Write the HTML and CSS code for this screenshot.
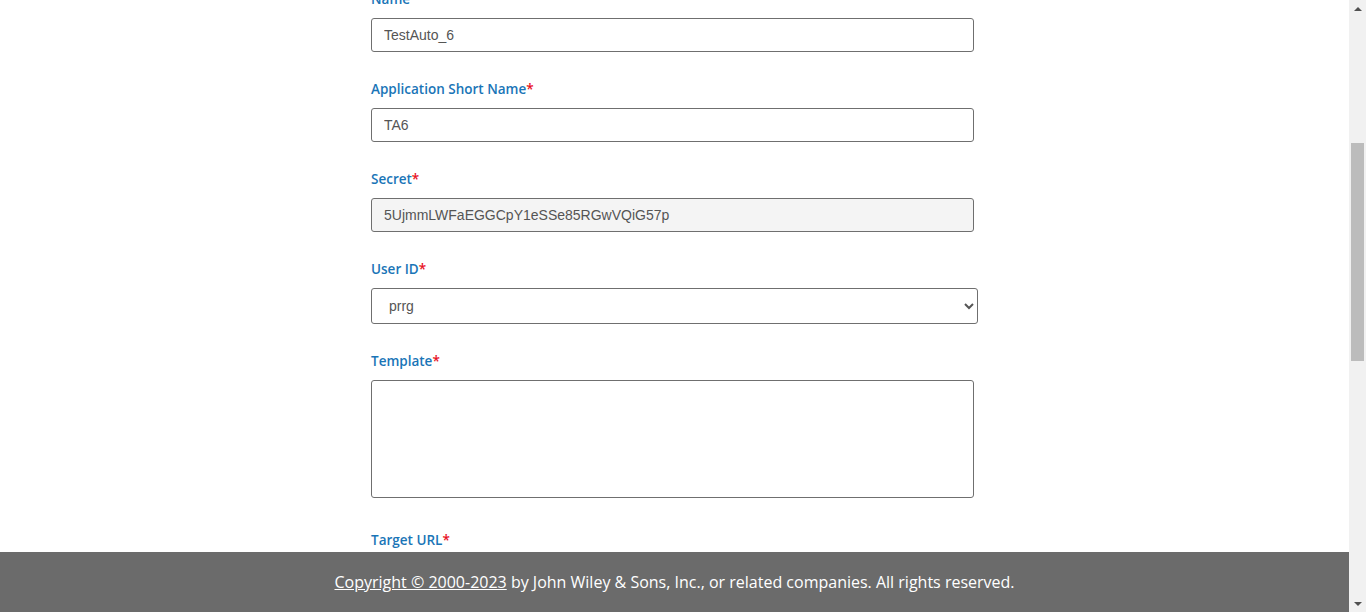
FILE: index.html
```html
<!DOCTYPE html>
<html lang="en">
<head>
<meta charset="utf-8">
<title>Edit Application</title>
<link rel="stylesheet" href="styles.css">
</head>
<body>
<div class="viewport">
  <main class="page">
    <form class="app-form">
      <div class="field">
        <label class="field-label" for="name">Name<span class="req">*</span></label>
        <input class="text-input" id="name" type="text" value="TestAuto_6">
      </div>
      <div class="field">
        <label class="field-label" for="short">Application Short Name<span class="req">*</span></label>
        <input class="text-input" id="short" type="text" value="TA6">
      </div>
      <div class="field">
        <label class="field-label" for="secret">Secret<span class="req">*</span></label>
        <input class="text-input readonly" id="secret" type="text" value="5UjmmLWFaEGGCpY1eSSe85RGwVQiG57p" readonly>
      </div>
      <div class="field">
        <label class="field-label" for="user">User ID<span class="req">*</span></label>
        <select class="select-input" id="user">
          <option>prrg</option>
        </select>
      </div>
      <div class="field field-area">
        <label class="field-label" for="template">Template<span class="req">*</span></label>
        <textarea class="area-input" id="template"></textarea>
      </div>
      <div class="field">
        <label class="field-label" for="target">Target URL<span class="req">*</span></label>
        <input class="text-input" id="target" type="text" value="">
      </div>
      <div class="field">
        <label class="field-label" for="desc">Description</label>
        <input class="text-input" id="desc" type="text" value="">
      </div>
    </form>
  </main>
</div>
<footer class="site-footer">
  <p class="footer-text"><a class="footer-link" href="#">Copyright © 2000-2023</a> by John Wiley &amp; Sons, Inc., or related companies. All rights reserved.</p>
</footer>
<div class="scrollbar" aria-hidden="true">
  <span class="sb-arrow sb-up"></span>
  <div class="sb-track"><span class="sb-thumb"></span></div>
  <span class="sb-arrow sb-down"></span>
</div>
<script src="script.js"></script>
</body>
</html>
```
FILE: styles.css
```css
html, body {
  margin: 0;
  padding: 0;
}
body {
  background: #ffffff;
  font-family: "Open Sans", "Liberation Sans", sans-serif;
}
.viewport {
  margin-right: 17px;
  min-height: 1623px;
}
.page {
  width: 607px;
  margin: 0 auto;
  padding-top: 343px;
}
.app-form {
  display: flex;
  flex-direction: column;
}
.field {
  display: flex;
  flex-direction: column;
  align-items: flex-start;
  margin-bottom: 27px;
}
.field-area {
  margin-bottom: 32px;
}
.field-label {
  font-family: "Open Sans", sans-serif;
  font-size: 13.5px;
  font-weight: 600;
  line-height: 20px;
  color: #1a75b7;
  margin-bottom: 9px;
}
.req {
  color: #e8101e;
}
.text-input {
  box-sizing: border-box;
  width: 603px;
  height: 34px;
  margin: 0;
  padding: 0 12px;
  border: 1px solid #6f6f6f;
  border-radius: 3px;
  font-family: "Liberation Sans", Arial, sans-serif;
  font-size: 14px;
  color: #555555;
  background: #ffffff;
  outline: none;
}
.text-input.readonly {
  background: #f4f4f4;
}
.select-input {
  box-sizing: border-box;
  width: 607px;
  height: 36px;
  margin: 0;
  padding: 0 0 0 13px;
  border: 1px solid #6f6f6f;
  border-radius: 3px;
  font-family: "Liberation Sans", Arial, sans-serif;
  font-size: 14px;
  color: #555555;
  background: #ffffff;
}
.area-input {
  box-sizing: border-box;
  width: 603px;
  height: 118px;
  margin: 0;
  border: 1px solid #6f6f6f;
  border-radius: 3px;
  resize: none;
  font-family: "Liberation Sans", Arial, sans-serif;
  font-size: 14px;
}
.site-footer {
  position: fixed;
  left: 0;
  right: 17px;
  bottom: 0;
  height: 60px;
  background: #6b6b6b;
  display: flex;
  align-items: center;
  justify-content: center;
}
.footer-text {
  margin: 0;
  font-family: "Open Sans", sans-serif;
  font-size: 16px;
  color: #ffffff;
  line-height: 22px;
}
.footer-link {
  color: #ffffff;
  text-decoration: underline;
}
.scrollbar {
  position: fixed;
  top: 0;
  right: 0;
  width: 17px;
  height: 612px;
  background: #f1f1f1;
  display: flex;
  flex-direction: column;
  align-items: center;
}
.sb-arrow {
  flex: 0 0 17px;
  width: 17px;
  display: flex;
  align-items: center;
  justify-content: center;
}
.sb-arrow::before {
  content: "";
  width: 0;
  height: 0;
  border-left: 4px solid transparent;
  border-right: 4px solid transparent;
}
.sb-up::before {
  border-bottom: 4px solid #505050;
}
.sb-down::before {
  border-top: 4px solid #505050;
}
.sb-track {
  flex: 1;
  width: 17px;
  display: flex;
  justify-content: center;
  padding-top: 126px;
  box-sizing: border-box;
}
.sb-thumb {
  width: 13px;
  height: 218px;
  background: #bcbcbc;
}
```
FILE: script.js
```js
window.scrollTo(0, 354);
window.addEventListener('load', function () { window.scrollTo(0, 354); });
```
